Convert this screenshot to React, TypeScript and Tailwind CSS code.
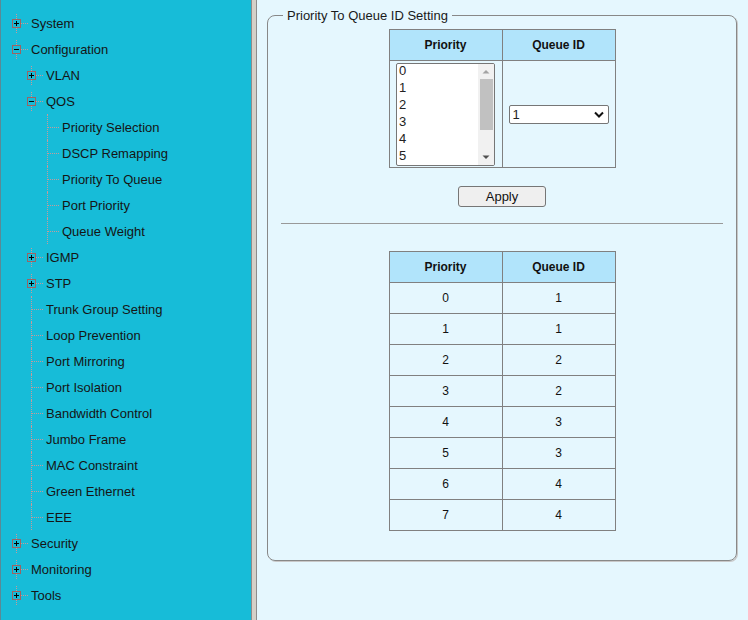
import React from 'react';

type Node = { level: number; icon?: '+' | '-'; label: string };

const tree: Node[] = [
  { level: 0, icon: '+', label: 'System' },
  { level: 0, icon: '-', label: 'Configuration' },
  { level: 1, icon: '+', label: 'VLAN' },
  { level: 1, icon: '-', label: 'QOS' },
  { level: 2, label: 'Priority Selection' },
  { level: 2, label: 'DSCP Remapping' },
  { level: 2, label: 'Priority To Queue' },
  { level: 2, label: 'Port Priority' },
  { level: 2, label: 'Queue Weight' },
  { level: 1, icon: '+', label: 'IGMP' },
  { level: 1, icon: '+', label: 'STP' },
  { level: 1, label: 'Trunk Group Setting' },
  { level: 1, label: 'Loop Prevention' },
  { level: 1, label: 'Port Mirroring' },
  { level: 1, label: 'Port Isolation' },
  { level: 1, label: 'Bandwidth Control' },
  { level: 1, label: 'Jumbo Frame' },
  { level: 1, label: 'MAC Constraint' },
  { level: 1, label: 'Green Ethernet' },
  { level: 1, label: 'EEE' },
  { level: 0, icon: '+', label: 'Security' },
  { level: 0, icon: '+', label: 'Monitoring' },
  { level: 0, icon: '+', label: 'Tools' },
];

const mapping = [
  [0, 1], [1, 1], [2, 2], [3, 2], [4, 3], [5, 3], [6, 4], [7, 4],
];

// tree connector: dotted lines plus the expand/collapse box
const Connector = ({ icon }: { icon?: '+' | '-' }) => (
  <div className="flex h-[26px] w-[19px] shrink-0 items-center">
    <div className="flex h-full w-[9px] flex-col items-center">
      {icon ? (
        <>
          <div className="mt-[4px] h-[5px] border-l border-dotted border-[#c79a9a]" />
          <div className="flex h-[9px] w-[9px] items-center justify-center border border-[#9a6464] bg-[#17bcd8]">
            <svg width="7" height="7" viewBox="0 0 7 7">
              <rect x="1" y="3" width="5" height="1" fill="#000" />
              {icon === '+' && <rect x="3" y="1" width="1" height="5" fill="#000" />}
            </svg>
          </div>
          <div className="h-[5px] border-l border-dotted border-[#c79a9a]" />
        </>
      ) : (
        <div className="h-full border-l border-dotted border-[#c79a9a]" />
      )}
    </div>
    <div className={`h-0 border-t border-dotted border-[#c79a9a] ${icon ? 'w-[7px]' : 'ml-[-4px] w-[11px]'}`} />
  </div>
);

const TreeRow = ({ node }: { node: Node }) => {
  const pad = node.level === 0 ? 'pl-[11px]' : node.level === 1 ? 'pl-[26px]' : 'pl-[42px]';
  return (
    <div className={`flex h-[26px] items-center ${pad}`}>
      <Connector icon={node.icon} />
      <span className="text-[13px] leading-none whitespace-nowrap text-[#151515]">{node.label}</span>
    </div>
  );
};

const ListBox = () => (
  <div className="mx-auto flex h-[103px] w-[99px] overflow-hidden rounded-[2px] border border-[#767676] bg-white">
    <div className="mt-[-2px] flex-1 pl-[2px] text-[13px] leading-[17px] text-[#222]">
      {[0, 1, 2, 3, 4, 5].map((n) => (
        <div key={n}>{n}</div>
      ))}
    </div>
    <div className="flex w-[16px] flex-col items-center bg-[#f1f1f1]">
      <svg width="16" height="15" viewBox="0 0 16 15">
        <path d="M4.5 9.5 L8 6 L11.5 9.5 Z" fill="#a3a3a3" />
      </svg>
      <div className="h-[51px] w-[13px] bg-[#c1c1c1]" />
      <div className="flex-1" />
      <svg width="16" height="15" viewBox="0 0 16 15">
        <path d="M4.5 5.5 L8 9 L11.5 5.5 Z" fill="#505050" />
      </svg>
    </div>
  </div>
);

const Dropdown = () => (
  <div className="mx-auto flex h-[19px] w-[100px] items-center justify-between rounded-[2px] border border-[#767676] bg-white pl-[3px] pr-[4px]">
    <span className="text-[13px] leading-none text-[#222]">1</span>
    <svg width="10" height="7" viewBox="0 0 10 7">
      <path d="M1 1.5 L5 5.5 L9 1.5" stroke="#111" strokeWidth="2" fill="none" />
    </svg>
  </div>
);

const th = 'h-[31px] border border-[#808080] bg-[#b1e4fb] text-[12px] font-bold text-[#111]';
const td = 'h-[31px] border border-[#808080] text-center text-[12px] text-[#111]';

export default function App() {
  return (
    <div className="flex h-[620px] w-[748px] overflow-hidden bg-[#e5f7fe] font-['Liberation_Sans',Arial,sans-serif]">
      {/* left navigation tree */}
      <div className="w-[251px] shrink-0 border-l border-[#5a8a96] bg-[#17bcd8] pt-[10px]">
        {tree.map((n) => (
          <TreeRow key={n.label} node={n} />
        ))}
      </div>
      <div className="w-[6px] shrink-0 border-x border-[#8c8c8c] bg-[#d4d0c8]" />

      {/* main content */}
      <div className="flex-1 pl-[10px] pr-[11px] pt-[8px]">
        <fieldset className="rounded-[8px] border border-[#888] px-[13px] pb-[29px] shadow-[1px_1px_0_#c8c8c8]">
          <legend className="ml-[2px] px-[4px] text-[13px] leading-[15px] text-[#1a1a1a]">
            Priority To Queue ID Setting
          </legend>

          <table className="mx-auto mt-[6px] w-[227px] border-collapse">
            <thead>
              <tr>
                <th className={`${th} w-[113px]`}>Priority</th>
                <th className={th}>Queue ID</th>
              </tr>
            </thead>
            <tbody>
              <tr>
                <td className="h-[107px] border border-[#808080] py-[1px]">
                  <ListBox />
                </td>
                <td className="border border-[#808080]">
                  <Dropdown />
                </td>
              </tr>
            </tbody>
          </table>

          <div className="mt-[18px] flex justify-center">
            <button className="h-[21px] w-[88px] rounded-[3px] border border-[#767676] bg-[#efefef] text-[13px] leading-none text-[#111]">
              Apply
            </button>
          </div>

          <hr className="mt-[16px] border-t border-[#999]" />

          <table className="mx-auto mt-[27px] w-[227px] border-collapse">
            <thead>
              <tr>
                <th className={`${th} w-[113px]`}>Priority</th>
                <th className={th}>Queue ID</th>
              </tr>
            </thead>
            <tbody>
              {mapping.map(([p, q]) => (
                <tr key={p}>
                  <td className={td}>{p}</td>
                  <td className={td}>{q}</td>
                </tr>
              ))}
            </tbody>
          </table>
        </fieldset>
      </div>
    </div>
  );
}
